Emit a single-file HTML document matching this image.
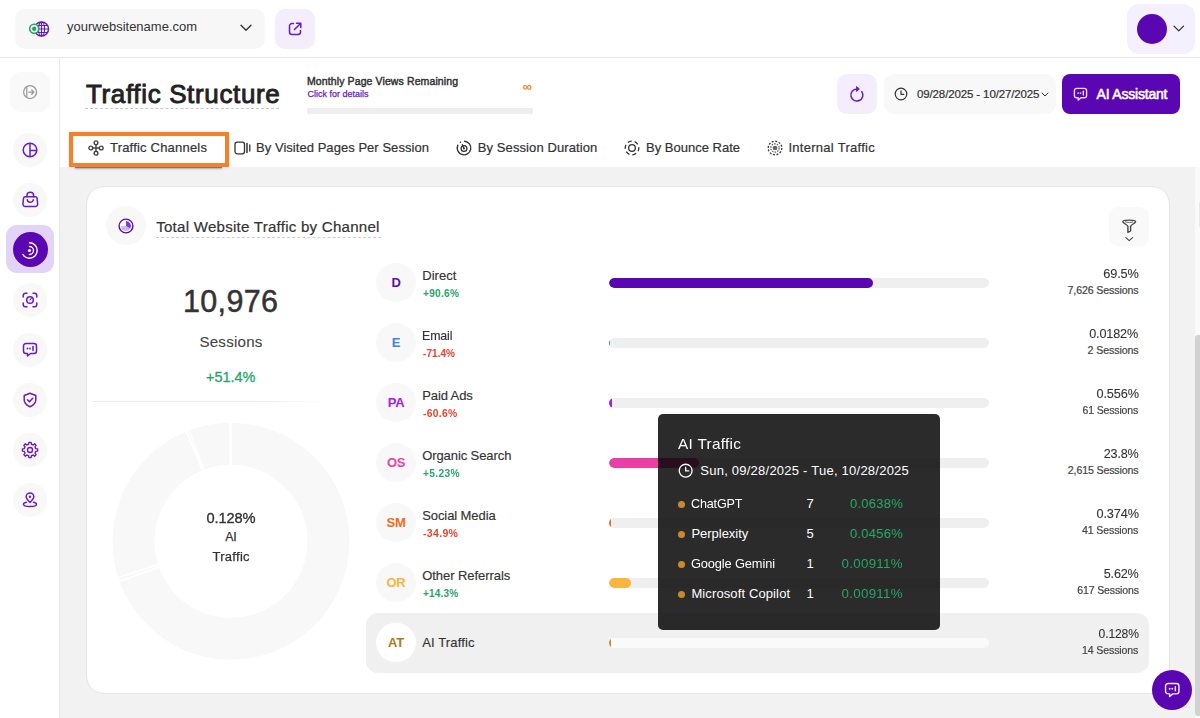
<!DOCTYPE html>
<html><head><meta charset="utf-8">
<style>
*{box-sizing:border-box;margin:0;padding:0}
html,body{width:1200px;height:718px;overflow:hidden;background:#f2f2f2;font-family:"Liberation Sans",sans-serif;color:#333}
.abs{position:absolute}
#top{position:absolute;left:0;top:0;width:1200px;height:58px;background:#fff;border-bottom:1px solid #e9e9e9}
#side{position:absolute;left:0;top:58px;width:60px;height:660px;background:#fff;border-right:1px solid #e9e9e9}
#head{position:absolute;left:60px;top:58px;width:1140px;height:109px;background:#fff}
.t{position:absolute;white-space:nowrap;line-height:1}
svg{position:absolute;overflow:visible}
</style></head><body>
<div id="top"></div>
<div id="side"></div>
<div id="head"></div>
<!--TOP-->
<div class="abs" style="left:15px;top:9px;width:250px;height:40px;background:#f7f7f7;border-radius:10px"></div>
<svg style="left:29px;top:19px" width="22" height="20" viewBox="0 0 22 20">
 <circle cx="12.5" cy="10" r="7" fill="#fff" stroke="#6a1bbf" stroke-width="1.5"/>
 <ellipse cx="12.5" cy="10" rx="3" ry="7" fill="none" stroke="#6a1bbf" stroke-width="1.2"/>
 <path d="M5.5 10h14M6.6 6.5h11.8M6.6 13.5h11.8M12.5 3v14" stroke="#6a1bbf" stroke-width="1.2" fill="none"/>
 <circle cx="5.2" cy="9.8" r="4.5" fill="#fff" stroke="#22a55f" stroke-width="1.6"/>
 <circle cx="5.2" cy="9.8" r="2.2" fill="#22a55f"/>
</svg>
<div class="t" style="left:67px;top:20px;font-size:13px;color:#333;">yourwebsitename.com</div>
<svg style="left:240px;top:24px" width="12" height="8" viewBox="0 0 12 8"><path d="M1 1.2l5 5 5-5" fill="none" stroke="#333" stroke-width="1.4" stroke-linecap="round" stroke-linejoin="round"/></svg>
<div class="abs" style="left:275px;top:9px;width:40px;height:40px;background:#f3edfc;border-radius:10px"></div>
<svg style="left:288px;top:22px" width="14" height="14" viewBox="0 0 14 14"><path d="M5.5 1.5H4a2.5 2.5 0 0 0-2.500 2.500v6A2.500 2.500 0 0 0 4 12.500h6a2.500 2.500 0 0 0 2.500-2.500V8.500" fill="none" stroke="#6a1bbf" stroke-width="1.5" stroke-linecap="round"/><path d="M8.500 1.200h4.300v4.300M12.500 1.500L6.500 7.500" fill="none" stroke="#6a1bbf" stroke-width="1.500" stroke-linecap="round" stroke-linejoin="round"/></svg>
<div class="abs" style="left:1126.500px;top:4px;width:68.300px;height:50px;background:#f5f0fd;border-radius:12px"></div>
<div class="abs" style="left:1136.700px;top:13.800px;width:30px;height:30px;background:#5b06b3;border-radius:50%"></div>
<svg style="left:1173.300px;top:24.500px" width="11.500" height="7.600" viewBox="0 0 12 8"><path d="M1 1.200l5 5 5-5" fill="none" stroke="#333" stroke-width="1.400" stroke-linecap="round" stroke-linejoin="round"/></svg>
<!--SIDE-->
<div class="abs" style="left:10px;top:71.600px;width:40px;height:40px;background:#f9f9f9;border-radius:11px"></div>
<svg style="left:22px;top:83.700px" width="16.200" height="16.200" viewBox="0 0 18 18"><circle cx="9" cy="9" r="7.2" fill="none" stroke="#9a9a9a" stroke-width="1.4"/><path d="M5.300 3v12" stroke="#9a9a9a" stroke-width="1.400"/><path d="M7.500 9h5.500M10.800 6.600L13.200 9l-2.400 2.400" fill="none" stroke="#9a9a9a" stroke-width="1.400" stroke-linecap="round" stroke-linejoin="round"/></svg>
<div class="abs" style="left:13px;top:133px;width:34px;height:34px;background:#f8f8f8;border-radius:50%"></div>
<svg style="left:22px;top:142px" width="16" height="16" viewBox="0 0 16 16"><circle cx="8" cy="8" r="6.800" fill="none" stroke="#6a1bbf" stroke-width="1.500"/><path d="M8 1.200v13.600M8 8.600h6.800" stroke="#6a1bbf" stroke-width="1.500" fill="none"/></svg>
<div class="abs" style="left:13px;top:183px;width:34px;height:34px;background:#f8f8f8;border-radius:50%"></div>
<svg style="left:22px;top:191px" width="17" height="17" viewBox="0 0 17 17"><g fill="none" stroke="#6a1bbf" stroke-width="1.500" stroke-linecap="round" stroke-linejoin="round"><path d="M3.300 5.800h10a1.800 1.800 0 0 1 1.800 1.600l.55 5.400a2.500 2.500 0 0 1-2.500 2.800H3.450a2.500 2.500 0 0 1-2.500-2.800l.55-5.400A1.800 1.800 0 0 1 3.300 5.800z"/><path d="M5 5.800V4.300a3.300 3 0 0 1 6.600 0V5.800"/><path d="M5.300 8.800a3 2.400 0 0 0 6 0"/></g></svg>
<div class="abs" style="left:6px;top:225.300px;width:48px;height:48.200px;background:#e2d4f7;border-radius:11px"></div>
<div class="abs" style="left:12.500px;top:231.800px;width:35.200px;height:35.200px;background:#5b06b3;border-radius:50%"></div>
<svg style="left:21.300px;top:240.500px" width="18" height="18" viewBox="0 0 18 18"><circle cx="8.500" cy="9.500" r="1.600" fill="#fff"/><path d="M8.500 5.500a4 4 0 0 1 0 8" fill="none" stroke="#fff" stroke-width="1.400" stroke-linecap="round"/><path d="M8.500 1.800a7.700 7.700 0 0 1 0 15.400a7.700 7.700 0 0 1-6.500-3.500" fill="none" stroke="#fff" stroke-width="1.400" stroke-linecap="round"/></svg>
<div class="abs" style="left:13px;top:283px;width:34px;height:34px;background:#f8f8f8;border-radius:50%"></div>
<svg style="left:22px;top:292px" width="16" height="16" viewBox="0 0 16 16"><circle cx="8" cy="8" r="3.300" fill="none" stroke="#6a1bbf" stroke-width="1.500"/><path d="M8 8l1.200-1.500" stroke="#6a1bbf" stroke-width="1.200" stroke-linecap="round"/><path d="M1.200 5V3.500a2.300 2.300 0 0 1 2.300-2.300H5M11 1.200h1.500a2.300 2.300 0 0 1 2.300 2.300V5M14.800 11v1.500a2.300 2.300 0 0 1-2.300 2.300H11M5 14.800H3.500a2.300 2.300 0 0 1-2.300-2.300V11" fill="none" stroke="#6a1bbf" stroke-width="1.500" stroke-linecap="round"/></svg>
<div class="abs" style="left:13px;top:333px;width:34px;height:34px;background:#f8f8f8;border-radius:50%"></div>
<svg style="left:22px;top:342px" width="16" height="16" viewBox="0 0 16 16"><path d="M4 1.500h8a2.500 2.500 0 0 1 2.500 2.500v5a2.500 2.500 0 0 1-2.500 2.500H8.500L5.500 14v-2.500H4A2.500 2.500 0 0 1 1.500 9V4A2.500 2.500 0 0 1 4 1.500z" fill="none" stroke="#6a1bbf" stroke-width="1.500" stroke-linejoin="round"/><circle cx="5.500" cy="6.500" r="0.900" fill="#6a1bbf"/><circle cx="8" cy="6.500" r="0.900" fill="#6a1bbf"/><path d="M11 4.500v4" stroke="#6a1bbf" stroke-width="1.500" stroke-linecap="round"/></svg>
<div class="abs" style="left:13px;top:383px;width:34px;height:34px;background:#f8f8f8;border-radius:50%"></div>
<svg style="left:22px;top:392px" width="16" height="16" viewBox="0 0 16 16"><path d="M8 1.300l5.800 2.200v4.300c0 3.200-2.400 5.500-5.800 7-3.400-1.500-5.800-3.800-5.800-7V3.500z" fill="none" stroke="#6a1bbf" stroke-width="1.500" stroke-linejoin="round"/><path d="M5.500 7.800l1.900 1.900 3.300-3.400" fill="none" stroke="#6a1bbf" stroke-width="1.500" stroke-linecap="round" stroke-linejoin="round"/></svg>
<div class="abs" style="left:13px;top:433px;width:34px;height:34px;background:#f8f8f8;border-radius:50%"></div>
<svg style="left:22px;top:442px" width="16" height="16" viewBox="0 0 16 16"><circle cx="8" cy="8" r="2.500" fill="none" stroke="#6a1bbf" stroke-width="1.400"/><path d="M6.62 2.26L6.92 0.38L9.08 0.38L9.38 2.26L11.08 2.97L12.62 1.84L14.16 3.38L13.03 4.92L13.74 6.62L15.62 6.92L15.62 9.08L13.74 9.38L13.03 11.08L14.16 12.62L12.62 14.16L11.08 13.03L9.38 13.74L9.08 15.62L6.92 15.62L6.62 13.74L4.92 13.03L3.38 14.16L1.84 12.62L2.97 11.08L2.26 9.38L0.38 9.08L0.38 6.92L2.26 6.62L2.97 4.92L1.84 3.38L3.38 1.84L4.92 2.97Z" fill="none" stroke="#6a1bbf" stroke-width="1.400" stroke-linejoin="round"/></svg>
<div class="abs" style="left:13px;top:483px;width:34px;height:34px;background:#f8f8f8;border-radius:50%"></div>
<svg style="left:22px;top:492px" width="16" height="16" viewBox="0 0 16 16"><path d="M8 10.500C5.500 8 4.200 6.500 4.200 4.800a3.800 3.800 0 0 1 7.600 0C11.800 6.500 10.500 8 8 10.500z" fill="none" stroke="#6a1bbf" stroke-width="1.500" stroke-linejoin="round"/><circle cx="8" cy="4.800" r="1.200" fill="#6a1bbf"/><path d="M4.500 10.300c-1.800.4-3 1.100-3 2 0 1.300 2.900 2.300 6.500 2.300s6.500-1 6.500-2.300c0-.9-1.200-1.600-3-2" fill="none" stroke="#6a1bbf" stroke-width="1.500" stroke-linecap="round"/></svg>
<!--HEAD-->
<div class="t" style="left:86px;top:81px;font-size:26px;color:#222;letter-spacing:0.64px;-webkit-text-stroke:0.9px #222">Traffic Structure</div>
<div class="abs" style="left:85px;top:108px;width:194px;height:0;border-top:1px dashed #c6c6c6"></div>
<div class="t" style="left:307px;top:75.600px;font-size:10.500px;color:#333;letter-spacing:0.11px;-webkit-text-stroke:0.45px #333">Monthly Page Views Remaining</div>
<div class="t" style="left:307.500px;top:90px;font-size:9px;color:#6a1bbf;-webkit-text-stroke:0.25px #6a1bbf">Click for details</div>
<div class="t" style="left:522.500px;top:79.700px;font-size:13px;font-weight:bold;color:#f5822a">&#8734;</div>
<div class="abs" style="left:307px;top:107.500px;width:226px;height:6.300px;background:#eeeeee;border-radius:1px"></div>
<div class="abs" style="left:837px;top:74px;width:40px;height:40px;background:#f3edfc;border-radius:10px"></div>
<svg style="left:849px;top:86px" width="16" height="16" viewBox="0 0 16 16"><path d="M12.800 5.600A6 6 0 1 1 7.800 3" fill="none" stroke="#6a1bbf" stroke-width="1.500" stroke-linecap="round"/><path d="M7.600 0.600L10.300 3 7.600 5.400z" fill="#6a1bbf" stroke="#6a1bbf" stroke-width="1" stroke-linejoin="round"/></svg>
<div class="abs" style="left:884px;top:74px;width:172px;height:40px;background:#f8f8f8;border-radius:10px"></div>
<svg style="left:894px;top:87px" width="14" height="14" viewBox="0 0 14 14"><circle cx="7" cy="7" r="5.800" fill="none" stroke="#333" stroke-width="1.200"/><path d="M7 3.800V7.300h2.800" fill="none" stroke="#333" stroke-width="1.200" stroke-linecap="round" stroke-linejoin="round"/></svg>
<div class="t" style="left:917px;top:88.800px;font-size:11.5px;color:#333;letter-spacing:-0.128px;-webkit-text-stroke:0.2px #333">09/28/2025 - 10/27/2025</div>
<svg style="left:1041px;top:92px" width="8" height="6" viewBox="0 0 8 6"><path d="M1 1l3 3 3-3" fill="none" stroke="#333" stroke-width="1" stroke-linecap="round" stroke-linejoin="round"/></svg>
<div class="abs" style="left:1062px;top:74px;width:118px;height:40px;background:#5b06b3;border-radius:8px"></div>
<svg style="left:1072.5px;top:86.500px" width="15" height="15" viewBox="0 0 16 16"><path d="M4 1.500h8a2.500 2.500 0 0 1 2.500 2.500v5a2.500 2.500 0 0 1-2.500 2.500H8.500L5.500 14v-2.500H4A2.500 2.500 0 0 1 1.500 9V4A2.500 2.500 0 0 1 4 1.500z" fill="none" stroke="#e9d9fb" stroke-width="1.500" stroke-linejoin="round"/><circle cx="5.500" cy="6.500" r="0.900" fill="#e9d9fb"/><circle cx="8" cy="6.500" r="0.900" fill="#e9d9fb"/><path d="M11 4.500v4" stroke="#e9d9fb" stroke-width="1.500" stroke-linecap="round"/></svg>
<div class="t" style="left:1096.5px;top:86.800px;font-size:14px;color:#fff;letter-spacing:-0.2px;-webkit-text-stroke:0.55px #fff">AI Assistant</div>
<!--TABS-->
<div class="abs" style="left:75px;top:166px;width:147px;height:2.200px;background:#7d7d7d;box-shadow:0 1px 2px rgba(0,0,0,0.3)"></div>
<div class="abs" style="left:69px;top:132px;width:160px;height:35px;border:4px solid #f5822a;background:#fff;box-shadow:0 0 3px rgba(0,0,0,0.12)"></div>
<svg style="left:88px;top:140px" width="16" height="16" viewBox="0 0 16 16"><g fill="none" stroke="#444" stroke-width="1.400"><circle cx="8" cy="2.800" r="1.900"/><circle cx="8" cy="13.200" r="1.900"/><circle cx="2.800" cy="8" r="1.900"/><circle cx="13.200" cy="8" r="1.900"/><path d="M8 4.700v6.600M4.700 8h6.600"/></g></svg>
<div class="t" style="left:110px;top:141.25px;font-size:13px;color:#333;-webkit-text-stroke:0.2px #333;letter-spacing:0.197px">Traffic Channels</div>
<svg style="left:234px;top:141px" width="18" height="14" viewBox="0 0 18 14"><rect x="1" y="1.200" width="9.500" height="11.600" rx="2.200" fill="none" stroke="#333" stroke-width="1.300"/><path d="M13 2.500v9" stroke="#333" stroke-width="1.500" stroke-linecap="round"/><path d="M15.800 4v6" stroke="#333" stroke-width="1.300" stroke-linecap="round"/></svg>
<div class="t" style="left:256px;top:141.25px;font-size:13px;color:#333;-webkit-text-stroke:0.2px #333;letter-spacing:0.043px">By Visited Pages Per Session</div>
<svg style="left:456.300px;top:140.300px" width="16" height="16" viewBox="0 0 16 16"><path d="M8.59 1.23A6.800 6.800 0 1 1 1.84 5.13" fill="none" stroke="#333" stroke-width="1.400" stroke-linecap="round"/><circle cx="4.40" cy="2.23" r="0.800" fill="#333"/><circle cx="8" cy="8.500" r="2.900" fill="none" stroke="#333" stroke-width="1.300"/><circle cx="8" cy="8.500" r="0.900" fill="#333"/><path d="M8 8.500L6.300 4.600" stroke="#333" stroke-width="1.300" stroke-linecap="round"/></svg>
<div class="t" style="left:477.8px;top:141.25px;font-size:13px;color:#333;-webkit-text-stroke:0.2px #333;letter-spacing:0.09px">By Session Duration</div>
<svg style="left:624px;top:140px" width="16" height="16" viewBox="0 0 16 16"><circle cx="8" cy="8" r="6.800" fill="none" stroke="#333" stroke-width="1.300" stroke-dasharray="4.200 2.900" stroke-dashoffset="1"/><circle cx="8" cy="8" r="3.300" fill="none" stroke="#333" stroke-width="1.300"/></svg>
<div class="t" style="left:646px;top:141.25px;font-size:13px;color:#333;-webkit-text-stroke:0.2px #333;letter-spacing:0.004px">By Bounce Rate</div>
<svg style="left:767px;top:140px" width="16" height="16" viewBox="0 0 16 16"><circle cx="8" cy="8" r="6.800" fill="none" stroke="#333" stroke-width="1.300" stroke-dasharray="2 1.560"/><circle cx="8" cy="8" r="4.200" fill="none" stroke="#555" stroke-width="1.200" stroke-dasharray="1.500 1.140"/><circle cx="8" cy="8" r="2.300" fill="#666"/></svg>
<div class="t" style="left:788.4px;top:141.25px;font-size:13px;color:#333;-webkit-text-stroke:0.2px #333;letter-spacing:0.284px">Internal Traffic</div>
<!--CARD-->
<div class="abs" style="left:85.500px;top:186px;width:1084px;height:507.500px;background:#fff;border:1px solid #e5e5e5;border-radius:18px"></div>
<div class="abs" style="left:106.400px;top:206.200px;width:39.300px;height:39.300px;background:#f8f8f8;border-radius:50%"></div>
<svg style="left:118px;top:218px" width="16" height="16" viewBox="0 0 16 16"><circle cx="8" cy="8" r="6.900" fill="#fdfcff" stroke="#5b06b3" stroke-width="1.400"/><path d="M8 8L8.00 3.00A5 5 0 0 1 12.10 10.87Z" fill="#7a3fd1"/><path d="M8 8L12.10 10.87A5 5 0 0 1 3.00 8.17Z" fill="#cdb6f0"/></svg>
<div class="t" style="left:156.2px;top:218.52px;font-size:15.1px;color:#333;-webkit-text-stroke:0.2px #333;letter-spacing:0.238px">Total Website Traffic by Channel</div>
<div class="abs" style="left:156px;top:237px;width:225px;height:0;border-top:1px dashed #cdcdcd"></div>
<div class="abs" style="left:1109.300px;top:206.500px;width:39.700px;height:39.700px;background:#f9f9f9;border-radius:9px"></div>
<svg style="left:1121px;top:217px" width="16" height="24" viewBox="0 0 16 24"><g fill="none" stroke="#444" stroke-width="1.200" stroke-linejoin="round" stroke-linecap="round"><path d="M1.800 4.800C1.800 2.600 14.600 2.600 14.600 4.800C14.600 6.200 10.300 7.600 9.600 9.200V14L6.900 15.400V9.200C6.200 7.600 1.800 6.200 1.800 4.800Z" stroke-width="1.400"/><path d="M4.600 4.900c1.500 .8 5.700 .8 7.200 0" stroke="#8a8a8a" stroke-width="1.200"/><path d="M4.800 20.600L8.200 23.600l3.400-3" stroke-width="1.100"/></g></svg>
<div class="t" style="left:130.5px;width:200px;text-align:center;top:285.55px;font-size:30.5px;color:#333;-webkit-text-stroke:0.5px #333;letter-spacing:0.34px;text-indent:0.34px">10,976</div>
<div class="t" style="left:130.9px;width:200px;text-align:center;top:333.92px;font-size:15.1px;color:#444;-webkit-text-stroke:0.1px #444;letter-spacing:0.25px;text-indent:0.25px">Sessions</div>
<div class="t" style="left:130.7px;width:200px;text-align:center;top:369.62px;font-size:14.5px;color:#27a567;-webkit-text-stroke:0.3px #27a567;letter-spacing:-0.038px;text-indent:-0.038px">+51.4%</div>
<div class="abs" style="left:92px;top:401px;width:238px;height:1px;background:linear-gradient(90deg,#ececec,#ececec 70%,#fff)"></div>
<svg style="left:0;top:0" width="1200" height="718" viewBox="0 0 1200 718"><path d="M231.00 422.10A119.2 119.2 0 1 1 118.84 581.66L159.77 566.93A75.7 75.7 0 1 0 231.00 465.60Z" fill="#f8f8f8" stroke="#fff" stroke-width="1.500"/><path d="M118.79 581.53A119.2 119.2 0 0 1 117.46 577.59L158.89 564.34A75.7 75.7 0 0 0 159.74 566.85Z" fill="#f8f8f8" stroke="#fff" stroke-width="1.500"/><path d="M117.46 577.59A119.2 119.2 0 0 1 186.27 430.81L202.59 471.13A75.7 75.7 0 0 0 158.89 564.34Z" fill="#f8f8f8" stroke="#fff" stroke-width="1.500"/><path d="M186.27 430.81A119.2 119.2 0 0 1 188.88 429.79L204.25 470.48A75.7 75.7 0 0 0 202.59 471.13Z" fill="#f8f8f8" stroke="#fff" stroke-width="1.500"/><path d="M188.88 429.79A119.2 119.2 0 0 1 230.04 422.10L230.39 465.60A75.7 75.7 0 0 0 204.25 470.48Z" fill="#f8f8f8" stroke="#fff" stroke-width="1.500"/><path d="M230.04 422.10A119.2 119.2 0 0 1 231.00 422.10L231.00 465.60A75.7 75.7 0 0 0 230.39 465.60Z" fill="#f8f8f8" stroke="#fff" stroke-width="1.500"/></svg>
<div class="t" style="left:130.6px;width:200px;text-align:center;top:509.57px;font-size:15.2px;color:#333;-webkit-text-stroke:0.35px #333;letter-spacing:-0.15px;text-indent:-0.15px;transform:scaleX(0.9651);transform-origin:50% 50%">0.128%</div>
<div class="t" style="left:131px;width:200px;text-align:center;top:530.99px;font-size:12.3px;color:#333;-webkit-text-stroke:0.25px #333;letter-spacing:-0.12px;text-indent:-0.12px">AI</div>
<div class="t" style="left:131px;width:200px;text-align:center;top:551.09px;font-size:12.3px;color:#333;-webkit-text-stroke:0.25px #333;letter-spacing:0.3px;text-indent:0.3px;transform:scaleX(1.0544);transform-origin:50% 50%">Traffic</div>
<!--ROWS-->
<div class="abs" style="left:366px;top:613.300px;width:783px;height:59.500px;background:#f0f0f0;border-radius:12px"></div>
<div class="abs" style="left:376.300px;top:263.1px;width:39.400px;height:39.400px;background:#f8f8f8;border-radius:50%"></div>
<div class="t" style="left:376px;top:275.8px;width:40px;text-align:center;font-size:13px;font-weight:bold;color:#5b0eb8;letter-spacing:-0.3px">D</div>
<div class="t" style="left:422.2px;top:268.95px;font-size:13px;color:#333;-webkit-text-stroke:0.15px #333;letter-spacing:0.05px">Direct</div>
<div class="t" style="left:423px;top:288.62px;font-size:10px;font-weight:bold;color:#27a567;letter-spacing:0.32px">+90.6%</div>
<div class="abs" style="left:609px;top:278px;width:380px;height:10px;background:#efefef;border-radius:5px;overflow:hidden"><div style="width:264px;height:10px;background:#5b06b3;border-radius:5px"></div></div>
<div class="t" style="right:61.5px;top:266.75px;font-size:13.2px;color:#333;-webkit-text-stroke:0.1px #333;letter-spacing:-0.15px;margin-right:0.15px;transform:scaleX(0.9644);transform-origin:100% 50%">69.5%</div>
<div class="t" style="right:61.5px;top:285.07px;font-size:10.6px;color:#444;-webkit-text-stroke:0.2px #444;letter-spacing:-0.112px;margin-right:0.112px">7,626 Sessions</div>
<div class="abs" style="left:376.300px;top:323.1px;width:39.400px;height:39.400px;background:#f8f8f8;border-radius:50%"></div>
<div class="t" style="left:376px;top:335.8px;width:40px;text-align:center;font-size:13px;font-weight:bold;color:#3b82f6;letter-spacing:-0.3px">E</div>
<div class="t" style="left:422.2px;top:328.95px;font-size:13px;color:#333;-webkit-text-stroke:0.15px #333;letter-spacing:-0.15px;transform:scaleX(0.9555);transform-origin:0 50%">Email</div>
<div class="t" style="left:423px;top:348.62px;font-size:10px;font-weight:bold;color:#e8432d;letter-spacing:0.062px">-71.4%</div>
<div class="abs" style="left:609px;top:338px;width:380px;height:10px;background:#efefef;border-radius:5px;overflow:hidden"><div style="width:1px;height:10px;background:#3b82f6;border-radius:0"></div></div>
<div class="t" style="right:61.5px;top:326.75px;font-size:13.2px;color:#333;-webkit-text-stroke:0.1px #333;letter-spacing:-0.15px;margin-right:0.15px;transform:scaleX(0.9578);transform-origin:100% 50%">0.0182%</div>
<div class="t" style="right:61.5px;top:345.07px;font-size:10.6px;color:#444;-webkit-text-stroke:0.2px #444;letter-spacing:-0.103px;margin-right:0.103px">2 Sessions</div>
<div class="abs" style="left:376.300px;top:383.1px;width:39.400px;height:39.400px;background:#f8f8f8;border-radius:50%"></div>
<div class="t" style="left:376px;top:395.8px;width:40px;text-align:center;font-size:13px;font-weight:bold;color:#a020f0;letter-spacing:-0.3px">PA</div>
<div class="t" style="left:422.2px;top:388.95px;font-size:13px;color:#333;-webkit-text-stroke:0.15px #333;letter-spacing:-0.104px">Paid Ads</div>
<div class="t" style="left:423px;top:408.62px;font-size:10px;font-weight:bold;color:#e8432d;letter-spacing:0.3px;transform:scaleX(1.0334);transform-origin:0 50%">-60.6%</div>
<div class="abs" style="left:609px;top:398px;width:380px;height:10px;background:#efefef;border-radius:5px;overflow:hidden"><div style="width:3px;height:10px;background:#a020f0;border-radius:0"></div></div>
<div class="t" style="right:61.5px;top:386.75px;font-size:13.2px;color:#333;-webkit-text-stroke:0.1px #333;letter-spacing:-0.15px;margin-right:0.15px;transform:scaleX(0.9663);transform-origin:100% 50%">0.556%</div>
<div class="t" style="right:61.5px;top:405.07px;font-size:10.6px;color:#444;-webkit-text-stroke:0.2px #444;letter-spacing:-0.15px;margin-right:0.15px;transform:scaleX(0.9908);transform-origin:100% 50%">61 Sessions</div>
<div class="abs" style="left:376.300px;top:443.1px;width:39.400px;height:39.400px;background:#f8f8f8;border-radius:50%"></div>
<div class="t" style="left:376px;top:455.8px;width:40px;text-align:center;font-size:13px;font-weight:bold;color:#ec3fa6;letter-spacing:-0.3px">OS</div>
<div class="t" style="left:422.2px;top:448.95px;font-size:13px;color:#333;-webkit-text-stroke:0.15px #333;letter-spacing:-0.087px">Organic Search</div>
<div class="t" style="left:423px;top:468.62px;font-size:10px;font-weight:bold;color:#27a567;letter-spacing:0.3px;transform:scaleX(1.0252);transform-origin:0 50%">+5.23%</div>
<div class="abs" style="left:609px;top:458px;width:380px;height:10px;background:#efefef;border-radius:5px;overflow:hidden"><div style="width:90.4px;height:10px;background:#ec3fa6;border-radius:5px"></div></div>
<div class="t" style="right:61.5px;top:446.75px;font-size:13.2px;color:#333;-webkit-text-stroke:0.1px #333;letter-spacing:-0.15px;margin-right:0.15px;transform:scaleX(0.9535);transform-origin:100% 50%">23.8%</div>
<div class="t" style="right:61.5px;top:465.07px;font-size:10.6px;color:#444;-webkit-text-stroke:0.2px #444;letter-spacing:-0.135px;margin-right:0.135px">2,615 Sessions</div>
<div class="abs" style="left:376.300px;top:503.1px;width:39.400px;height:39.400px;background:#f8f8f8;border-radius:50%"></div>
<div class="t" style="left:376px;top:515.8px;width:40px;text-align:center;font-size:13px;font-weight:bold;color:#f26a21;letter-spacing:-0.3px">SM</div>
<div class="t" style="left:422.2px;top:508.95px;font-size:13px;color:#333;-webkit-text-stroke:0.15px #333;letter-spacing:-0.085px">Social Media</div>
<div class="t" style="left:423px;top:528.62px;font-size:10px;font-weight:bold;color:#e8432d;letter-spacing:0.3px;transform:scaleX(1.0515);transform-origin:0 50%">-34.9%</div>
<div class="abs" style="left:609px;top:518px;width:380px;height:10px;background:#efefef;border-radius:5px;overflow:hidden"><div style="width:2px;height:10px;background:#f26a21;border-radius:0"></div></div>
<div class="t" style="right:61.5px;top:506.75px;font-size:13.2px;color:#333;-webkit-text-stroke:0.1px #333;letter-spacing:-0.15px;margin-right:0.15px;transform:scaleX(0.9663);transform-origin:100% 50%">0.374%</div>
<div class="t" style="right:61.5px;top:525.07px;font-size:10.6px;color:#444;-webkit-text-stroke:0.2px #444;letter-spacing:-0.15px;margin-right:0.15px;transform:scaleX(0.9979);transform-origin:100% 50%">41 Sessions</div>
<div class="abs" style="left:376.300px;top:563.1px;width:39.400px;height:39.400px;background:#f8f8f8;border-radius:50%"></div>
<div class="t" style="left:376px;top:575.8px;width:40px;text-align:center;font-size:13px;font-weight:bold;color:#fbb53c;letter-spacing:-0.3px">OR</div>
<div class="t" style="left:422.2px;top:568.95px;font-size:13px;color:#333;-webkit-text-stroke:0.15px #333;letter-spacing:-0.056px">Other Referrals</div>
<div class="t" style="left:423px;top:588.62px;font-size:10px;font-weight:bold;color:#27a567;letter-spacing:0.2px">+14.3%</div>
<div class="abs" style="left:609px;top:578px;width:380px;height:10px;background:#efefef;border-radius:5px;overflow:hidden"><div style="width:21.6px;height:10px;background:#fbb53c;border-radius:5px"></div></div>
<div class="t" style="right:61.5px;top:566.75px;font-size:13.2px;color:#333;-webkit-text-stroke:0.1px #333;letter-spacing:-0.15px;margin-right:0.15px;transform:scaleX(0.9535);transform-origin:100% 50%">5.62%</div>
<div class="t" style="right:61.5px;top:585.07px;font-size:10.6px;color:#444;-webkit-text-stroke:0.2px #444;letter-spacing:-0.15px;margin-right:0.15px;transform:scaleX(0.9958);transform-origin:100% 50%">617 Sessions</div>
<div class="abs" style="left:376.300px;top:623.1px;width:39.400px;height:39.400px;background:#fff;border-radius:50%"></div>
<div class="t" style="left:376px;top:635.8px;width:40px;text-align:center;font-size:13px;font-weight:bold;color:#b07a1f;letter-spacing:-0.3px">AT</div>
<div class="t" style="left:422.2px;top:635.95px;font-size:13px;color:#333;-webkit-text-stroke:0.15px #333;letter-spacing:0.138px">AI Traffic</div>
<div class="abs" style="left:609px;top:638px;width:380px;height:10px;background:#fafafa;border-radius:5px;overflow:hidden"><div style="width:1.5px;height:10px;background:#c98a2b;border-radius:0"></div></div>
<div class="t" style="right:61.5px;top:626.75px;font-size:13.2px;color:#333;-webkit-text-stroke:0.1px #333;letter-spacing:-0.15px;margin-right:0.15px;transform:scaleX(0.9186);transform-origin:100% 50%">0.128%</div>
<div class="t" style="right:61.5px;top:645.07px;font-size:10.6px;color:#444;-webkit-text-stroke:0.2px #444;letter-spacing:-0.15px;margin-right:0.15px;transform:scaleX(0.9979);transform-origin:100% 50%">14 Sessions</div>
<!--TOOLTIP-->
<div class="abs" style="left:1195px;top:167px;width:5px;height:551px;background:#fafafa"></div>
<div class="abs" style="left:1195px;top:335px;width:6px;height:381px;background:#d2d2d2;border-radius:3px 0 0 3px"></div>
<div class="abs" style="left:1198.500px;top:201px;width:4px;height:27px;background:#eaeaea;border-radius:3px;filter:blur(0.6px)"></div>
<div class="abs" style="left:658px;top:413.500px;width:282px;height:216.500px;background:rgba(6,6,6,0.85);border-radius:5px"></div>
<div class="t" style="left:678.2px;top:436.62px;font-size:14.5px;color:#fff;letter-spacing:0.3px;transform:scaleX(1.0562);transform-origin:0 50%">AI Traffic</div>
<svg style="left:678px;top:462.600px" width="15.300" height="15.300" viewBox="0 0 15 15"><circle cx="7.500" cy="7.500" r="6.300" fill="none" stroke="#fff" stroke-width="1.300"/><path d="M7.500 4V7.800h3" fill="none" stroke="#fff" stroke-width="1.300" stroke-linecap="round" stroke-linejoin="round"/></svg>
<div class="t" style="left:700.3px;top:463.8px;font-size:13px;color:#fff;letter-spacing:0.236px">Sun, 09/28/2025 - Tue, 10/28/2025</div>
<div class="abs" style="left:678px;top:500.9px;width:7px;height:7px;background:#c98a2b;border-radius:50%"></div>
<div class="t" style="left:691.4px;top:497.05px;font-size:13px;color:#fff;letter-spacing:-0.15px;transform:scaleX(0.9664);transform-origin:0 50%">ChatGPT</div>
<div class="t" style="left:800px;top:497.05px;width:20px;text-align:center;font-size:13px;color:#fff">7</div>
<div class="t" style="right:297.2px;top:497.05px;font-size:13px;color:#27a567;letter-spacing:0.245px;margin-right:-0.245px">0.0638%</div>
<div class="abs" style="left:678px;top:530.9px;width:7px;height:7px;background:#c98a2b;border-radius:50%"></div>
<div class="t" style="left:691.4px;top:527.05px;font-size:13px;color:#fff;letter-spacing:-0.02px">Perplexity</div>
<div class="t" style="left:800px;top:527.05px;width:20px;text-align:center;font-size:13px;color:#fff">5</div>
<div class="t" style="right:297.2px;top:527.05px;font-size:13px;color:#27a567;letter-spacing:0.245px;margin-right:-0.245px">0.0456%</div>
<div class="abs" style="left:678px;top:560.9px;width:7px;height:7px;background:#c98a2b;border-radius:50%"></div>
<div class="t" style="left:691.4px;top:557.05px;font-size:13px;color:#fff;letter-spacing:-0.15px;transform:scaleX(0.9892);transform-origin:0 50%">Google Gemini</div>
<div class="t" style="left:800px;top:557.05px;width:20px;text-align:center;font-size:13px;color:#fff">1</div>
<div class="t" style="right:297.2px;top:557.05px;font-size:13px;color:#27a567;letter-spacing:0.3px;margin-right:-0.3px;transform:scaleX(1.0253);transform-origin:100% 50%">0.00911%</div>
<div class="abs" style="left:678px;top:590.9px;width:7px;height:7px;background:#c98a2b;border-radius:50%"></div>
<div class="t" style="left:691.4px;top:587.05px;font-size:13px;color:#fff;letter-spacing:0.118px">Microsoft Copilot</div>
<div class="t" style="left:800px;top:587.05px;width:20px;text-align:center;font-size:13px;color:#fff">1</div>
<div class="t" style="right:297.2px;top:587.05px;font-size:13px;color:#27a567;letter-spacing:0.3px;margin-right:-0.3px;transform:scaleX(1.0253);transform-origin:100% 50%">0.00911%</div>
<div class="abs" style="left:1151.500px;top:669.500px;width:40.500px;height:40.500px;background:#5b06b3;border-radius:50%"></div>
<svg style="left:1163.600px;top:682px" width="16.500" height="16.500" viewBox="0 0 16 16"><path d="M4 1.500h8a2.500 2.500 0 0 1 2.500 2.500v5a2.500 2.500 0 0 1-2.500 2.500H8.500L5.500 14v-2.500H4A2.500 2.500 0 0 1 1.500 9V4A2.500 2.500 0 0 1 4 1.500z" fill="none" stroke="#f3e9ff" stroke-width="1.400" stroke-linejoin="round"/><circle cx="5.500" cy="6.500" r="0.900" fill="#f3e9ff"/><circle cx="8" cy="6.500" r="0.900" fill="#f3e9ff"/><path d="M11 4.500v4" stroke="#f3e9ff" stroke-width="1.400" stroke-linecap="round"/></svg>
</body></html>
